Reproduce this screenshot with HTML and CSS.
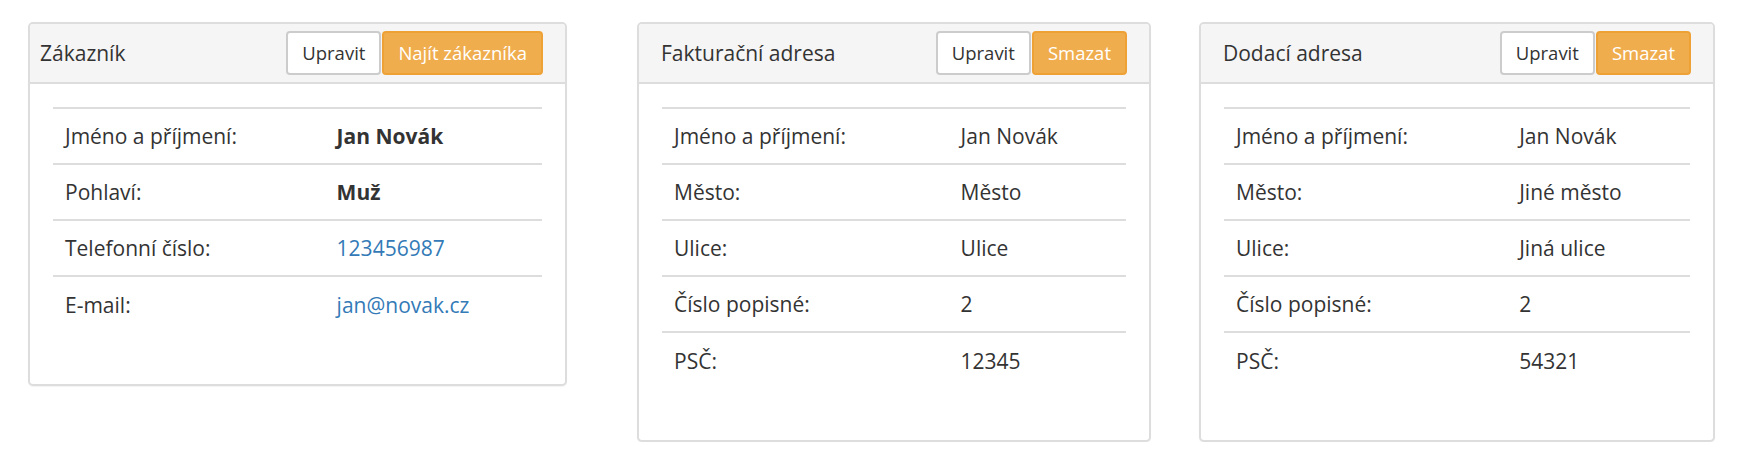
FILE: index.html
```html
<!DOCTYPE html>
<html lang="cs">
<head>
<meta charset="utf-8">
<title>Zákazník</title>
<link rel="stylesheet" href="styles.css">
</head>
<body>
<div class="page">
  <section class="panel panel-customer">
    <header class="panel-heading heading-tight">
      <h3 class="panel-title">Zákazník</h3>
      <div class="actions">
        <button class="btn btn-default">Upravit</button>
        <button class="btn btn-warning">Najít zákazníka</button>
      </div>
    </header>
    <div class="panel-body">
      <table class="table">
        <tr><td>Jméno a příjmení:</td><td class="strong">Jan Novák</td></tr>
        <tr><td>Pohlaví:</td><td class="strong">Muž</td></tr>
        <tr><td>Telefonní číslo:</td><td><a class="link" href="#">123456987</a></td></tr>
        <tr><td>E-mail:</td><td><a class="link" href="#">jan@novak.cz</a></td></tr>
      </table>
    </div>
  </section>

  <section class="panel panel-billing">
    <header class="panel-heading">
      <h3 class="panel-title">Fakturační adresa</h3>
      <div class="actions">
        <button class="btn btn-default">Upravit</button>
        <button class="btn btn-warning">Smazat</button>
      </div>
    </header>
    <div class="panel-body">
      <table class="table">
        <tr><td>Jméno a příjmení:</td><td>Jan Novák</td></tr>
        <tr><td>Město:</td><td>Město</td></tr>
        <tr><td>Ulice:</td><td>Ulice</td></tr>
        <tr><td>Číslo popisné:</td><td>2</td></tr>
        <tr><td>PSČ:</td><td>12345</td></tr>
      </table>
    </div>
  </section>

  <section class="panel panel-shipping">
    <header class="panel-heading">
      <h3 class="panel-title">Dodací adresa</h3>
      <div class="actions">
        <button class="btn btn-default">Upravit</button>
        <button class="btn btn-warning">Smazat</button>
      </div>
    </header>
    <div class="panel-body">
      <table class="table">
        <tr><td>Jméno a příjmení:</td><td>Jan Novák</td></tr>
        <tr><td>Město:</td><td>Jiné město</td></tr>
        <tr><td>Ulice:</td><td>Jiná ulice</td></tr>
        <tr><td>Číslo popisné:</td><td>2</td></tr>
        <tr><td>PSČ:</td><td>54321</td></tr>
      </table>
    </div>
  </section>
</div>
</body>
</html>
```

FILE: styles.css
```css
* { box-sizing: border-box; }

html, body {
  margin: 0;
  padding: 0;
  background: #ffffff;
}

body {
  font-family: "Open Sans", "Noto Sans", sans-serif;
  font-size: 21px;
  color: #333333;
}

.page {
  display: flex;
  align-items: flex-start;
  padding: 22px 0 0 28px;
}

.panel {
  background: #ffffff;
  border: 2px solid #dddddd;
  border-radius: 5px;
  box-shadow: 0 1px 1px rgba(0, 0, 0, 0.05);
}

.panel-customer { width: 539px; }
.panel-billing  { width: 514px; margin-left: 70px; }
.panel-shipping { width: 516px; margin-left: 48px; }

.panel-heading {
  display: flex;
  align-items: center;
  justify-content: space-between;
  padding: 7px 22px;
  background: #f5f5f5;
  border-bottom: 2px solid #dddddd;
  border-radius: 3px 3px 0 0;
}

.heading-tight { padding-left: 10px; }

.panel-title {
  margin: 0;
  font-size: 21px;
  font-weight: 400;
  color: #333333;
}

.actions {
  display: flex;
  gap: 1px;
}

.btn {
  height: 44px;
  padding: 0 14px;
  font-family: "Open Sans", "Noto Sans", sans-serif;
  font-size: 18.5px;
  line-height: 1;
  border-radius: 4px;
  border: 2px solid #cccccc;
  cursor: pointer;
}

.btn-default {
  background: #ffffff;
  color: #333333;
}

.btn-warning {
  background: #f0ad4e;
  border-color: #eea236;
  color: #ffffff;
}

.panel-body {
  padding: 23px 23px 24px 23px;
}

.table {
  width: 100%;
  border-collapse: collapse;
  margin-bottom: 28px;
}

.table td {
  height: 56px;
  padding: 0 12px;
  vertical-align: middle;
  border-top: 2px solid #dddddd;
}

.strong { font-weight: 700; }

.link {
  color: #337ab7;
  text-decoration: none;
}
```
